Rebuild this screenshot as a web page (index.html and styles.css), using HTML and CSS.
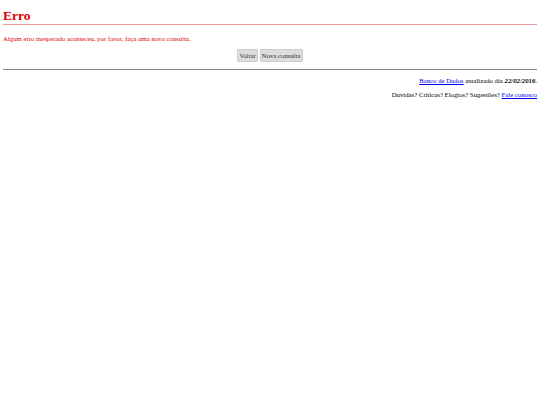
FILE: index.html
```html
<!DOCTYPE html>
<html>
<head>
<meta charset="utf-8">
<link rel="stylesheet" href="styles.css">
</head>
<body>
<div class="page">
  <h1 class="title">Erro</h1>
  <p class="msg">Algum erro inesperado aconteceu, por favor, faça uma nova consulta.</p>
  <div class="actions">
    <button class="btn">Voltar</button>
    <button class="btn">Nova consulta</button>
  </div>
  <hr class="sep">
  <p class="foot"><a href="#">Banco de Dados</a> atualizado dia <b><i>22/02/2016</i></b>.</p>
  <p class="foot">Duvidas? Criticas? Elogios? Sugestões? <a href="#">Fale conosco</a></p>
</div>
</body>
</html>
```
FILE: styles.css
```css
html, body { margin: 0; padding: 0; background: #fff; }
body { font-family: "Liberation Serif", "Times New Roman", serif; color: #000; }
.page { padding: 0 3px; }
.title {
  margin: 0;
  padding-top: 9px;
  font-size: 13.5px;
  line-height: 14px;
  color: #d00;
  font-weight: bold;
  border-bottom: 1px solid #e99;
  padding-bottom: 1px;
}
.msg {
  margin: 9px 0 0 0;
  font-size: 6.75px;
  line-height: 9px;
  color: #d00;
}
.actions {
  display: flex;
  justify-content: center;
  gap: 2px;
  margin-top: 6px;
}
.btn {
  font-family: "Liberation Serif", serif;
  font-size: 6.75px;
  line-height: 9px;
  padding: 1px 1px;
  background: #ddd;
  border: 1px solid #ccc;
  border-radius: 1px;
  color: #333;
}
.sep {
  margin: 7px 0 0 0;
  border: 0;
  border-top: 1px solid #888;
  height: 0;
}
.foot {
  text-align: right;
  font-size: 6.75px;
  line-height: 9px;
  margin: 6px 0 0 0;
}
.foot + .foot { margin-top: 5px; }
.foot a { color: #00e; }
```
